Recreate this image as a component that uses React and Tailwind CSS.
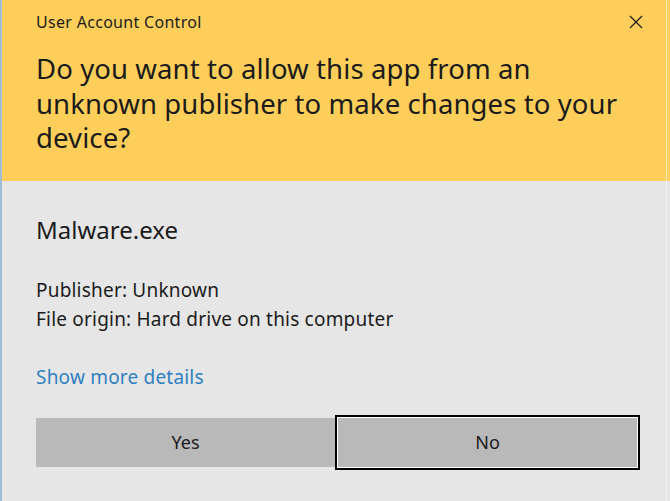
export default function App() {
  const font = { fontFamily: '"Noto Sans", "Open Sans", sans-serif' };

  return (
    <div
      className="relative w-[670px] h-[501px] flex flex-col border-l-2 border-[#9fbdd4] text-[#1b1b1b] overflow-hidden"
      style={font}
    >
      {/* Header */}
      <div className="h-[181px] bg-[#fdcf5a] pl-[34px] pr-[26px] pt-[10px]">
        <div className="flex items-center justify-between h-[24px]">
          <span className="text-[16px] tracking-[0.3px]">User Account Control</span>
          <svg width="14" height="14" viewBox="0 0 14 14" className="mr-[1px]">
            <path d="M1 1 L13 13 M13 1 L1 13" stroke="#222" strokeWidth="1.3" fill="none" />
          </svg>
        </div>
        <h1 className="mt-[18px] text-[27.5px] leading-[34.5px] tracking-[0.1px]">
          Do you want to allow this app from an
          <br />
          unknown publisher to make changes to your
          <br />
          device?
        </h1>
      </div>

      {/* Body */}
      <div className="flex-1 bg-[#e6e6e6] pl-[34px] pr-[33px]">
        <p className="mt-[33px] text-[24px] leading-[32px]">Malware.exe</p>
        <div className="mt-[30px] text-[19px] leading-[29px] tracking-[0.2px]">
          <p>Publisher: Unknown</p>
          <p>File origin: Hard drive on this computer</p>
        </div>
        <p className="mt-[29px] text-[19px] leading-[28px] tracking-[0.2px] text-[#2f7fc1]">
          Show more details
        </p>
        <div className="mt-[27px] grid grid-cols-2 gap-[3px]">
          <button className="h-[49px] bg-[#b9b9b9] text-[18px]">Yes</button>
          <button className="h-[49px] bg-[#b9b9b9] text-[18px] shadow-[0_0_0_1px_#ffffff,0_0_0_3px_#000000]">
            No
          </button>
        </div>
      </div>

      <div className="absolute right-[3px] top-0 bottom-0 w-px bg-white/60" />
    </div>
  );
}
